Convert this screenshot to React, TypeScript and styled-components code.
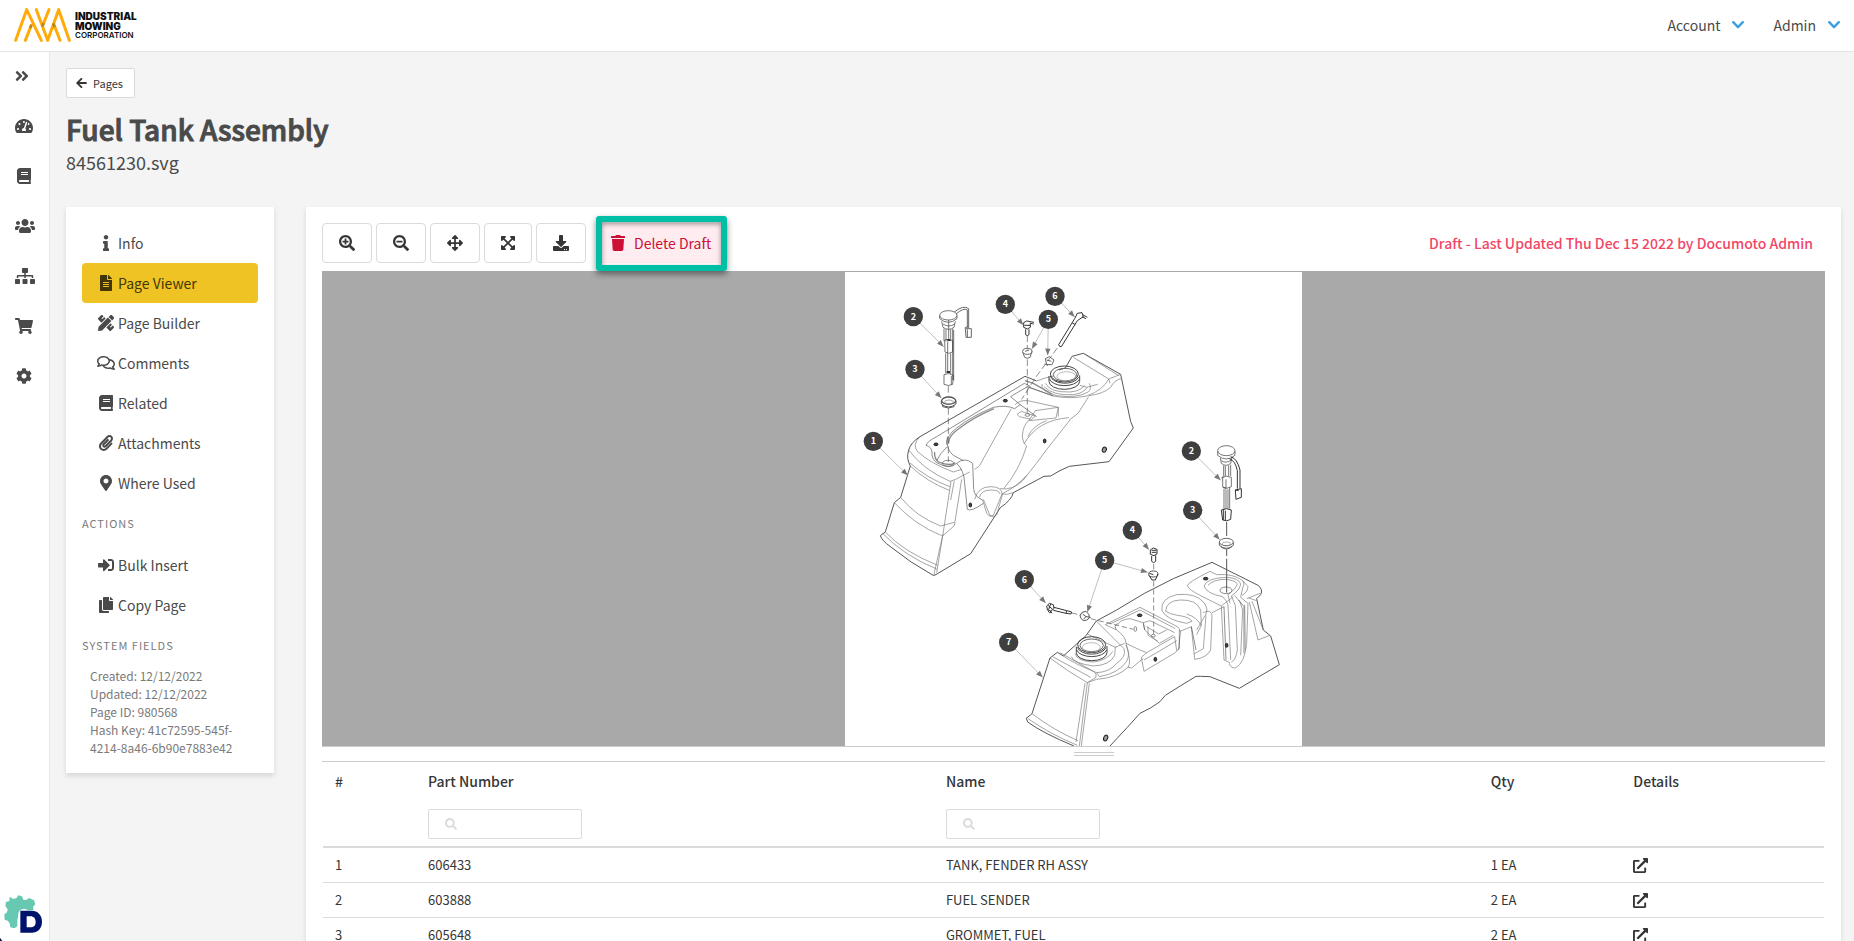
import React from 'react';
import styled, { createGlobalStyle, css } from 'styled-components';
import type { IconType } from 'react-icons';
import {
  FaAngleDoubleRight, FaArrowLeft, FaArrowsAlt, FaBook, FaCog, FaCopy, FaDownload, FaExpandArrowsAlt,
  FaExternalLinkAlt, FaFileAlt, FaInfo, FaMapMarkerAlt, FaPaperclip, FaPencilRuler, FaRegComments,
  FaSearch, FaSearchMinus, FaSearchPlus, FaShoppingCart, FaSignInAlt, FaSitemap, FaTachometerAlt,
  FaTrash, FaUsers,
} from 'react-icons/fa';

const sans = '"Noto Sans CJK SC", "Open Sans", sans-serif';
const ink = '#4a4a4a';
const line = '#dbdbdb';

const GlobalStyle = createGlobalStyle`
  *, *::before, *::after { box-sizing: border-box; }
  body { margin: 0; background: #f4f4f4; color: ${ink}; font: 14px/24px ${sans}; }
  button, input { font: inherit; color: inherit; }
  h1, p, ul { margin: 0; padding: 0; }
  ul { list-style: none; }
  a { color: inherit; text-decoration: none; }
  svg { flex: none; display: block; }
`;

const Shell = styled.div`
  display: flex;
  flex-direction: column;
  height: 100vh;
`;

const TopBar = styled.header`
  display: flex;
  align-items: center;
  justify-content: space-between;
  height: 52px;
  flex: none;
  padding: 0 14px 2px;
  background: #fff;
  border-bottom: 1px solid #e6e6e6;
`;

const Brand = styled.a`
  display: flex;
  align-items: center;
  gap: 4px;
  color: #111;
`;

const BrandName = styled.span`
  display: flex;
  flex-direction: column;
  padding-top: 2px;
  font: 900 10px/10px Inter, sans-serif;
`;

const BrandSub = styled.span`
  font-size: 8px;
  line-height: 9px;
  font-weight: 600;
`;

const TopMenu = styled.nav`
  display: flex;
  gap: 29px;
`;

const MenuButton = styled.button`
  display: flex;
  align-items: center;
  gap: 12px;
  padding: 0;
  border: 0;
  background: none;
`;

const Body = styled.div`
  display: flex;
  flex: 1;
  min-height: 0;
`;

const Rail = styled.nav`
  display: flex;
  flex-direction: column;
  justify-content: space-between;
  width: 50px;
  flex: none;
  background: #fff;
  border-right: 1px solid #e6e6e6;
`;

const Glyph = styled.span<{ $width?: number; $height?: number }>`
  display: flex;

  svg {
    width: ${p => p.$width ?? 16}px;
    height: ${p => p.$height ?? 16}px;
  }
`;

const RailLink = styled.a`
  display: flex;
  align-items: center;
  height: 50px;
  padding: 0 0 3px 15px;
`;

const Main = styled.main`
  flex: 1;
  min-width: 0;
  padding: 16px 13px 0 16px;
  overflow-y: auto;
  scrollbar-width: none;
`;

const BackButton = styled.button`
  display: flex;
  align-items: center;
  gap: 6px;
  height: 30px;
  padding: 0 11px 0 9px;
  font-size: 11px;
  color: #363636;
  background: #fff;
  border: 1px solid ${line};
  border-radius: 2px;
`;

const Title = styled.h1`
  margin-top: 14px;
  font-size: 28px;
  line-height: 34px;
  font-weight: 500;
  -webkit-text-stroke: 1px currentColor;
`;

const Subtitle = styled.p`
  font-size: 18px;
  line-height: 32px;
`;

const Columns = styled.div`
  display: flex;
  align-items: flex-start;
  gap: 32px;
  margin-top: 29px;
`;

const cardLook = css`
  background: #fff;
  box-shadow: 0 3px 5px rgba(10, 10, 10, 0.12);
`;

const SideCard = styled.aside`
  width: 208px;
  flex: none;
  padding: 16px;
  ${cardLook}
`;

const SideLink = styled.a<{ $active?: boolean }>`
  display: flex;
  align-items: center;
  gap: 2px;
  height: 40px;
  padding-left: 14px;
  border-radius: 4px;
  ${p => p.$active && css`
    background: #f0c324;
    color: #423607;
  `}
`;

const IconSlot = styled(Glyph)`
  justify-content: center;
  width: 20px;
`;

const SideLabel = styled.p`
  height: 40px;
  font-size: 11px;
  line-height: 40px;
  letter-spacing: 1px;
  color: #7a7a7a;
  text-transform: uppercase;
`;

const Actions = styled.ul`
  padding-top: 2px;
`;

const Facts = styled.div`
  padding: 2px 8px 0;
  font-size: 12px;
  line-height: 18px;
  color: #7a7a7a;
`;

const ViewerCard = styled.section`
  flex: 1;
  min-width: 0;
  min-height: 760px;
  padding: 16px;
  ${cardLook}
`;

const Toolbar = styled.div`
  display: flex;
  align-items: center;
  gap: 4px;
`;

const ToolButton = styled.button`
  display: flex;
  align-items: center;
  height: 40px;
  padding: 0 16px;
  color: #363636;
  background: #fff;
  border: 1px solid ${line};
  border-radius: 4px;
`;

const Highlighted = styled.div`
  position: relative;
  margin-left: 8px;
`;

const DeleteButton = styled(ToolButton)`
  gap: 9px;
  padding: 0 16px 0 12px;
  color: #cc0f35;
  background: #feecf0;
  border-color: #feecf0;
`;

const Frame = styled.span`
  position: absolute;
  inset: -7px 1px -8px -2px;
  border: 6px solid #00bfa5;
  border-radius: 3px;
  box-shadow: 0 3px 6px rgba(0, 0, 0, 0.45), inset 0 2px 5px rgba(0, 0, 0, 0.4);
  pointer-events: none;
`;

const DraftStatus = styled.p`
  margin-left: auto;
  padding-right: 12px;
  font-weight: 500;
  color: #f14668;
`;

const Stage = styled.div`
  display: flex;
  justify-content: center;
  height: 475px;
  margin-top: 8px;
  padding-top: 1px;
  overflow: hidden;
  background: #a9a9a9;
`;

const Sheet = styled.svg`
  background: #fff;
`;

const Splitter = styled.div`
  display: flex;
  align-items: center;
  justify-content: center;
  height: 16px;
  padding-left: 40px;
  border: solid #ccc;
  border-width: 1px 0;
`;

const Grip = styled.span`
  width: 40px;
  height: 4px;
  border: solid #ccc;
  border-width: 1px 0;
`;

const Parts = styled.table`
  width: 100%;
  table-layout: fixed;
  border-spacing: 0;
  padding: 0 1px;
  font-size: 13px;
  color: #363636;

  th, td {
    padding: 0 12px;
    text-align: left;
    vertical-align: middle;
  }
  th {
    height: 42px;
    padding-bottom: 4px;
    font-size: 14px;
    font-weight: 500;
  }
  td {
    height: 35px;
    border-bottom: 1px solid ${line};
  }
`;

const FilterCell = styled.td`
  && {
    height: 44px;
    padding-bottom: 2px;
    border-bottom: 2px solid ${line};
  }
`;

const Column = styled.col<{ $share: number }>`
  width: ${p => p.$share}%;
`;

const Filter = styled.label`
  display: flex;
  align-items: center;
  gap: 8px;
  width: 154px;
  height: 30px;
  padding: 0 8px 0 16px;
  color: ${line};
  border: 1px solid ${line};
  border-radius: 2px;
`;

const FilterInput = styled.input`
  min-width: 0;
  flex: 1;
  height: 24px;
  padding: 0;
  border: 0;
  outline: 0;
  background: none;
  color: ${ink};
`;

const Chevron = () => (
  <svg width="12" height="8" viewBox="0 0 12 8" fill="none" stroke="#3e9fe3" strokeWidth="2.4" strokeLinecap="round" strokeLinejoin="round" aria-hidden="true">
    <path d="M1.2 1.2l4.8 5 4.8-5" />
  </svg>
);

const BrandMark = () => (
  <svg width="57" height="34" viewBox="0 0 171 102" fill="none" stroke="#ffab0a" strokeWidth="9" strokeLinecap="round" aria-hidden="true">
    <path d="M5 97L38 5M38 5L82 97M34 97L52 52M67 5L101 97M105 5L88 48M134 5L101 97M134 5L166 97M138 97L120 50" />
    <path d="M48 60l4-9M85 56l4-11M117 46l5 11" stroke="#8a6a2c" strokeWidth="8" strokeLinecap="butt" opacity="0.6" />
  </svg>
);

const ProductMark = () => (
  <svg width="49" height="53" viewBox="0 0 147 159" aria-hidden="true">
    <path fill="#68c9b3" d="M29 26l11 7 10-3 4-8 12 3 4 10 8 1 10-6 14 7 4 12-7 8 2 10H82c-4-7-22-6-26 6-3 10 0 14-4 22v20l-9 6-12-3-2-12-6-8-9-3-1-16 8-6 2-9-7-10 2-12 10-3z" />
    <path fill="#00136b" fillRule="evenodd" d="M61 68h34c19 0 31 14 31 33s-12 33-31 33H61zM80 85v33h11c11 0 16-6 16-16s-5-17-16-17z" />
    <path fill="#1b1240" d="M0 149l7 10H0z" />
  </svg>
);

type Callout = { n: number; x: number; y: number; to: [number, number][] };

const upperCallouts: Callout[] = [
  { n: 2, x: 220, y: 140, to: [[311, 230]] },
  { n: 3, x: 225, y: 298, to: [[304, 384]] },
  { n: 1, x: 100, y: 514, to: [[203, 616]] },
  { n: 4, x: 496, y: 103, to: [[550, 165]] },
  { n: 5, x: 625, y: 148, to: [[576, 236], [623, 256]] },
  { n: 6, x: 645, y: 79, to: [[704, 141]] },
];

const lowerCallouts: Callout[] = [
  { n: 2, x: 574, y: 63, to: [[662, 151]] },
  { n: 3, x: 578, y: 241, to: [[659, 329]] },
  { n: 4, x: 397, y: 301, to: [[447, 359]] },
  { n: 5, x: 314, y: 391, to: [[443, 427], [262, 546]] },
  { n: 6, x: 73, y: 449, to: [[137, 519]] },
  { n: 7, x: 26, y: 637, to: [[128, 742]] },
];

const CalloutMark = ({ n, x, y, to }: Callout) => (
  <g>
    {to.map(([tx, ty]) => {
      const angle = (Math.atan2(ty - y, tx - x) * 180) / Math.PI;
      return (
        <g key={tx}>
          <path d={`M${x} ${y}L${tx} ${ty}`} stroke="#a0a0a0" strokeWidth="2" />
          <path d="M0 0L-20 -8V8z" fill="#777" stroke="none" transform={`translate(${tx} ${ty}) rotate(${angle})`} />
        </g>
      );
    })}
    <circle cx={x} cy={y} r="29" fill="#3f3f3f" stroke="none" />
    <text x={x} y={y + 9} textAnchor="middle" fontSize="27" fontWeight="700" fill="#fff" stroke="none">{n}</text>
  </g>
);

const UpperTank = () => (
  <g transform="translate(-5 -2) scale(0.33333)">
    {/* outer shell */}
    <path d="M555 319L240 500Q212 518 206 540Q198 566 211 588L182 682L163 698L136 786L121 797Q126 812 150 829Q210 878 281 917L291 912L392 851L481 713Q515 690 520 668L612 619L632 618Q660 600 688 589L807 575L880 474L872 455L842 313L730 250L696 259L676 294L657 300M555 319L590 333" strokeWidth="3" />
    <g stroke="#777">
      {/* front panel */}
      <path d="M206 540Q250 600 330 634L347 628L389 606M211 588Q262 636 328 661M209 578Q262 626 330 650M333 634L309 792L281 917M343 632L332 690M365 628L343 767L309 797M182 682Q228 740 302 768L343 757M163 698Q225 765 305 797M136 786Q190 845 293 886M128 790Q190 856 290 897M309 792L290 908M240 500Q216 524 232 544Q270 580 340 606L365 598" />
      {/* filler deck */}
      <path d="M590 333Q618 322 640 318M640 378Q690 388 740 378Q790 360 806 327L842 313M746 377Q790 372 812 352Q822 330 846 325M806 327L810 340M730 250L835 316M700 262L806 327M720 346L740 352L773 343M560 350L640 378M746 380L714 430L688 450" />
      <path d="M606 342Q600 364 650 377Q710 386 745 366Q756 356 748 340M612 350Q640 378 700 374Q730 370 742 352M616 340Q630 368 690 366Q720 364 734 346" />
      {/* tool tray */}
      <path d="M547 496Q550 465 566 452M547 496Q548 520 560 528M566 452L648 444L655 412L563 392Q538 390 525 404M655 412V440M566 452L586 422L655 412M531 433L544 424L586 438L574 448L538 440zM552 522Q592 450 687 443M563 500Q580 466 620 452M514 416L418 588L404 598M560 528Q538 600 492 655M480 656Q520 662 550 630Q590 580 622 536L690 450M486 672Q530 650 560 616" />
      <path d="M404 688Q414 650 452 650Q486 650 487 674L470 735Q455 748 440 730L428 690M418 682Q424 660 452 660Q478 660 480 672M430 688L450 737L460 736L486 672Q500 676 520 668" />
    </g>
    {/* opening lip */}
    <path d="M258 526Q262 514 290 500L553 340L572 350M258 526Q274 530 276 546Q274 566 290 578Q330 600 350 580Q374 560 398 580L401 656Q402 680 428 690M322 530Q300 550 290 572M320 524Q316 500 350 474Q392 440 460 412Q500 404 524 416L540 404M322 500Q318 540 340 556L370 572M350 580Q372 600 374 640L382 718Q394 726 430 700M512 380Q520 374 563 350L640 378M512 380L538 402L590 440" stroke="#555" />
    <path d="M284 546Q282 566 296 576Q330 590 346 578M326 520Q324 500 354 478Q400 442 462 416M555 332L580 340L636 372" stroke="#8a8a8a" strokeWidth="4" />
    {/* filler neck */}
    <g stroke="#444" strokeWidth="3">
      <path d="M627 318V334A46 24 0 0 0 719 334V316M628 326A46 25 0 0 0 718 328M631 318A44 26 0 0 0 716 322" />
      <ellipse cx="673" cy="312" rx="42" ry="24" />
      <ellipse cx="675" cy="314" rx="35" ry="19" stroke="#666" />
      <ellipse cx="679" cy="319" rx="28" ry="14" stroke="#999" strokeWidth="2" />
    </g>
    <g fill="#444" stroke="#222" strokeWidth="3">
      <ellipse cx="288" cy="523" rx="6" ry="4" />
      <ellipse cx="496" cy="392" rx="6" ry="4" />
      <ellipse cx="614" cy="513" rx="4" ry="6" />
      <ellipse cx="391" cy="705" rx="4" ry="6" />
      <ellipse cx="793" cy="539" rx="6" ry="8" fill="#999" transform="rotate(20 793 539)" />
    </g>
    <ellipse cx="562" cy="435" rx="7" ry="4" />
    <ellipse cx="324" cy="580" rx="17" ry="9" />
    {/* centre lines */}
    <path d="M325 348V380M325 414V576M562 196V238M562 268V428M652 234L590 318L545 388" strokeDasharray="20 9" />
    {/* fuel sender */}
    <g stroke="#333">
      <ellipse cx="325" cy="136" rx="26" ry="14" />
      <path d="M299 137V146Q325 168 351 146V137M305 154L309 172Q326 184 342 172L346 154M309 162Q326 174 344 162M312 176V214M318 178V214M332 178V214M338 176V330M314 210Q326 204 338 212V246Q326 254 315 246zM317 250V310M323 214V308M332 250V312M326 150V206" />
      <path d="M312 314Q326 306 340 316L338 343Q326 350 312 343zM334 318V344M341 180V332" />
      <path d="M343 126Q370 104 386 116V174M348 132Q372 112 382 120V174M376 176H394V202H378zM382 178V202M374 174L382 170" strokeWidth="3" stroke="#666" />
      <path d="M322 210h8M320 306h10" strokeWidth="6" />
    </g>
    {/* grommet */}
    <path d="M304 392V402Q326 420 348 402V392M308 404V410Q326 418 342 410V406" stroke="#555" strokeWidth="3" />
    <ellipse cx="326" cy="392" rx="21" ry="11" stroke="#555" strokeWidth="4" />
    <ellipse cx="327" cy="396" rx="13" ry="6" stroke="#777" />
    {/* fittings */}
    <g stroke="#333" strokeWidth="3">
      <path d="M551 158L560 153L572 155L582 157M551 158V172L562 177L571 172V158M553 166H571M557 178V194L562 197L567 194V178M572 160L581 162" />
      <ellipse cx="562" cy="244" rx="14" ry="9" stroke="#666" />
      <path d="M548 246L554 262Q562 268 570 262L576 244M555 244L568 240" stroke="#666" />
      <path d="M616 266L628 260L642 270L636 284L620 284zM620 270L634 274M614 282L624 286" stroke="#666" />
      <path d="M656 224L704 146M664 230L712 152M656 224Q658 232 664 230M704 146L712 130L726 128L730 140L712 152M728 134L742 142M726 140L738 146M696 158L706 164" />
    </g>
    {upperCallouts.map(c => <CalloutMark key={c.n} {...c} />)}
  </g>
);

const LowerTank = () => (
  <g transform="translate(155 158) scale(0.33333)">
    {/* outer shell */}
    <path d="M289 573L350 540Q430 488 520 446L636 397L774 466Q790 478 782 494L770 506L790 600L812 618L838 704L718 775L630 740L602 739L588 739Q540 768 496 796L480 815Q452 836 420 850L382 892L330 948M289 573L258 617L190 678L172 667L150 684L96 851L79 865L83 876Q130 910 222 948" strokeWidth="3" />
    <g stroke="#777">
      {/* front panel */}
      <path d="M150 684Q200 722 262 758L288 742Q292 730 280 724L180 668M158 680L272 742M262 758L238 948M268 760L244 948M255 760L228 936M96 851Q160 900 234 932M84 866Q150 912 232 946M79 865L83 860M262 758L290 748Q350 744 384 712" />
      {/* filler deck */}
      <path d="M190 678Q220 700 290 728Q330 726 350 700Q380 680 372 656L289 573M262 612L346 652M290 728L298 740Q356 730 380 694Q392 672 378 646M346 652L374 640M214 680Q220 700 280 708Q330 706 344 676L346 650M384 712L395 714L424 690L430 686M225 670Q230 694 282 696Q324 690 338 664" />
      {/* battery tray */}
      <path d="M316 584L344 570L420 532L532 590Q546 604 540 616M316 584L350 600Q378 620 378 640L420 660L440 668L524 620M352 586Q360 568 390 566L430 578L434 600L478 640L520 616M430 578L450 572L524 608M330 582L420 540L526 596M440 590L476 612L500 600M444 590V616L474 634M424 682L432 724L526 668L538 654V600M432 690L470 668L530 632M378 640Q396 700 384 712M524 620L530 662M424 682L440 668" />
      {/* cup recess */}
      <path d="M486 542Q480 506 530 494Q586 488 610 516Q626 534 618 552L590 600M497 545Q498 512 540 510Q590 508 602 540L604 586L590 614M486 542Q500 570 560 580L576 574Q568 560 532 556Q508 552 498 544M610 548Q632 536 636 556L632 660Q620 684 584 688L574 590M618 556L610 656L582 672M560 552Q592 562 604 588M540 604L574 590M636 548L672 530" />
      {/* sender pocket */}
      <path d="M562 466Q566 456 630 424L650 434Q700 430 728 452Q736 462 728 474L722 502L744 520L740 640Q734 700 706 714Q690 714 688 700M562 466Q566 480 604 498Q640 516 664 528L672 690L690 698M612 468Q620 444 680 442Q716 444 722 462Q720 480 694 498L706 526L712 660Q708 690 694 696M624 466Q640 448 678 448Q708 452 712 462Q708 476 684 494L690 520M612 468Q618 490 668 500Q680 512 684 524L692 690M704 496L720 516L728 540L722 676M746 504L770 512M748 516L774 630L810 616M756 514L790 600M728 452L744 470Q742 488 726 496M664 528L700 500M780 490L740 506M734 524L736 660" />
    </g>
    <path d="M672 530L678 690M716 510L732 530V670M574 590L588 660M350 600Q340 590 352 580M434 600L430 580M540 616L536 660" stroke="#555" />
    {/* filler neck */}
    <g stroke="#444" strokeWidth="3">
      <path d="M229 650V668A46 24 0 0 0 321 668V648M230 660A46 25 0 0 0 320 660M232 652A44 26 0 0 0 318 652" />
      <ellipse cx="275" cy="644" rx="42" ry="24" />
      <ellipse cx="275" cy="646" rx="35" ry="19" stroke="#666" />
      <ellipse cx="274" cy="652" rx="27" ry="14" stroke="#999" strokeWidth="2" />
    </g>
    <g fill="#444" stroke="#222" strokeWidth="3">
      <ellipse cx="419" cy="556" rx="7" ry="4" />
      <ellipse cx="617" cy="446" rx="7" ry="4" />
      <ellipse cx="466" cy="688" rx="4" ry="6" />
      <ellipse cx="680" cy="646" rx="4" ry="6" />
      <ellipse cx="317" cy="924" rx="6" ry="9" fill="#999" transform="rotate(20 317 924)" />
    </g>
    <ellipse cx="460" cy="617" rx="6" ry="4" />
    <ellipse cx="406" cy="597" rx="4" ry="7" />
    <ellipse cx="678" cy="481" rx="18" ry="10" />
    {/* centre lines */}
    <path d="M680 276V318M680 358V378M680 386V488" strokeWidth="3" />
    <path d="M461 402V422M461 454V612M216 549L244 556M272 566L400 598" strokeDasharray="16 8" />
    {/* fuel sender */}
    <g stroke="#333">
      <ellipse cx="679" cy="62" rx="26" ry="15" />
      <path d="M653 64V76Q679 98 705 76V64M661 84L664 100Q678 112 692 100L696 82M664 92Q678 102 694 90M671 106V140M676 108V138M686 106V138M692 104V138M664 144Q678 134 694 142V170Q682 178 668 172M668 140V170L678 176V148M672 176V240M678 178V236M684 178V236M689 172V236" />
      <path d="M664 240Q680 232 694 240L692 268Q680 276 668 270zM676 242V272M670 240V270M692 80Q712 86 720 120V176M688 86Q706 92 712 122V176" strokeWidth="3" />
      <path d="M706 180L724 176V202L708 208zM706 180L716 182" strokeWidth="3" />
    </g>
    {/* grommet */}
    <path d="M658 338V346Q679 364 700 346V338M662 350Q679 364 696 350" stroke="#666" strokeWidth="3" />
    <ellipse cx="679" cy="336" rx="21" ry="11" stroke="#666" strokeWidth="3" />
    <ellipse cx="679" cy="342" rx="13" ry="6" stroke="#888" />
    {/* fittings */}
    <g stroke="#333" strokeWidth="3">
      <path d="M451 360L460 354L471 358V372L462 377L451 373zM455 361H469M455 367H469M455 378V394L461 398L467 394V376" />
      <ellipse cx="460" cy="432" rx="14" ry="9" stroke="#555" />
      <path d="M447 436L456 450H466L474 432M448 430L460 434" />
      <path d="M140 528L148 520L160 524L162 536L152 543L142 538zM162 532L200 542L215 546L213 552L198 550L160 541M150 542L156 550M142 538L148 548L156 546M200 542L198 550M144 526L158 538M152 522L146 538" />
      <path d="M240 556Q244 544 258 544Q270 552 268 564Q262 572 250 572Q240 566 240 556zM248 552L258 560L250 568M258 560L272 562" stroke="#555" />
    </g>
    {lowerCallouts.map(c => <CalloutMark key={c.n} {...c} />)}
  </g>
);

type Entry = { label: string; Icon: IconType; width: number };

const railItems: Entry[] = [
  { label: 'Expand', Icon: FaAngleDoubleRight, width: 14 },
  { label: 'Dashboard', Icon: FaTachometerAlt, width: 18 },
  { label: 'Library', Icon: FaBook, width: 18 },
  { label: 'Users', Icon: FaUsers, width: 20 },
  { label: 'Organization', Icon: FaSitemap, width: 20 },
  { label: 'Orders', Icon: FaShoppingCart, width: 18 },
  { label: 'Settings', Icon: FaCog, width: 18 },
];

const sideItems: Entry[] = [
  { label: 'Info', Icon: FaInfo, width: 16 },
  { label: 'Page Viewer', Icon: FaFileAlt, width: 16 },
  { label: 'Page Builder', Icon: FaPencilRuler, width: 16 },
  { label: 'Comments', Icon: FaRegComments, width: 18 },
  { label: 'Related', Icon: FaBook, width: 16 },
  { label: 'Attachments', Icon: FaPaperclip, width: 16 },
  { label: 'Where Used', Icon: FaMapMarkerAlt, width: 16 },
];

const actionItems: Entry[] = [
  { label: 'Bulk Insert', Icon: FaSignInAlt, width: 16 },
  { label: 'Copy Page', Icon: FaCopy, width: 16 },
];

const tools: Entry[] = [
  { label: 'Zoom in', Icon: FaSearchPlus, width: 16 },
  { label: 'Zoom out', Icon: FaSearchMinus, width: 16 },
  { label: 'Pan', Icon: FaArrowsAlt, width: 16 },
  { label: 'Fit', Icon: FaExpandArrowsAlt, width: 14 },
  { label: 'Download', Icon: FaDownload, width: 16 },
];

const parts = [
  { item: 1, number: '606433', name: 'TANK, FENDER RH ASSY', qty: '1 EA' },
  { item: 2, number: '603888', name: 'FUEL SENDER', qty: '2 EA' },
  { item: 3, number: '605648', name: 'GROMMET, FUEL', qty: '2 EA' },
];

const SideItem = ({ label, Icon, width, active }: Entry & { active?: boolean }) => (
  <li>
    <SideLink href="#" $active={active}>
      <IconSlot $width={width}><Icon /></IconSlot>
      {label}
    </SideLink>
  </li>
);

const SearchBox = ({ label }: { label: string }) => (
  <Filter>
    <Glyph $width={12} $height={12}><FaSearch /></Glyph>
    <FilterInput type="text" aria-label={label} />
  </Filter>
);

export default function App() {
  return (
    <>
      <GlobalStyle />
      <Shell>
        <TopBar>
          <Brand href="#">
            <BrandMark />
            <BrandName>
              <span>INDUSTRIAL</span>
              <span>MOWING</span>
              <BrandSub>CORPORATION</BrandSub>
            </BrandName>
          </Brand>
          <TopMenu>
            <MenuButton type="button">Account <Chevron /></MenuButton>
            <MenuButton type="button">Admin <Chevron /></MenuButton>
          </TopMenu>
        </TopBar>
        <Body>
          <Rail>
            <ul>
              {railItems.map(({ label, Icon, width }) => (
                <li key={label}>
                  <RailLink href="#" aria-label={label}><Glyph $width={width}><Icon /></Glyph></RailLink>
                </li>
              ))}
            </ul>
            <ProductMark />
          </Rail>
          <Main>
            <BackButton type="button"><Glyph $width={11} $height={12}><FaArrowLeft /></Glyph> Pages</BackButton>
            <Title>Fuel Tank Assembly</Title>
            <Subtitle>84561230.svg</Subtitle>
            <Columns>
              <SideCard>
                <ul>
                  {sideItems.map(item => (
                    <SideItem key={item.label} {...item} active={item.label === 'Page Viewer'} />
                  ))}
                </ul>
                <SideLabel>Actions</SideLabel>
                <Actions>
                  {actionItems.map(item => <SideItem key={item.label} {...item} />)}
                </Actions>
                <SideLabel>System Fields</SideLabel>
                <Facts>
                  <p>Created: 12/12/2022</p>
                  <p>Updated: 12/12/2022</p>
                  <p>Page ID: 980568</p>
                  <p>Hash Key: 41c72595-545f-4214-8a46-6b90e7883e42</p>
                </Facts>
              </SideCard>
              <ViewerCard>
                <Toolbar>
                  {tools.map(({ label, Icon, width }) => (
                    <ToolButton key={label} type="button" aria-label={label}>
                      <Glyph $width={width}><Icon /></Glyph>
                    </ToolButton>
                  ))}
                  <Highlighted>
                    <DeleteButton type="button"><Glyph $width={14}><FaTrash /></Glyph> Delete Draft</DeleteButton>
                    <Frame />
                  </Highlighted>
                  <DraftStatus>Draft - Last Updated Thu Dec 15 2022 by Documoto Admin</DraftStatus>
                </Toolbar>
                <Stage>
                  <Sheet width="457" height="474" viewBox="0 0 457 474" fill="none" stroke="#555" strokeWidth="2" strokeLinejoin="round" role="img" aria-label="Fuel tank exploded view">
                    <UpperTank />
                    <LowerTank />
                  </Sheet>
                </Stage>
                <Splitter><Grip /></Splitter>
                <Parts>
                  <colgroup>
                    <Column $share={6.2} />
                    <Column $share={34.5} />
                    <Column $share={36.3} />
                    <Column $share={9.5} />
                    <Column $share={13.5} />
                  </colgroup>
                  <thead>
                    <tr>
                      <th scope="col">#</th>
                      <th scope="col">Part Number</th>
                      <th scope="col">Name</th>
                      <th scope="col">Qty</th>
                      <th scope="col">Details</th>
                    </tr>
                    <tr>
                      <FilterCell />
                      <FilterCell><SearchBox label="Filter by part number" /></FilterCell>
                      <FilterCell><SearchBox label="Filter by name" /></FilterCell>
                      <FilterCell />
                      <FilterCell />
                    </tr>
                  </thead>
                  <tbody>
                    {parts.map(p => (
                      <tr key={p.item}>
                        <td>{p.item}</td>
                        <td>{p.number}</td>
                        <td>{p.name}</td>
                        <td>{p.qty}</td>
                        <td><a href="#" aria-label={`Open ${p.name}`}><Glyph $width={15} $height={15}><FaExternalLinkAlt /></Glyph></a></td>
                      </tr>
                    ))}
                  </tbody>
                </Parts>
              </ViewerCard>
            </Columns>
          </Main>
        </Body>
      </Shell>
    </>
  );
}
